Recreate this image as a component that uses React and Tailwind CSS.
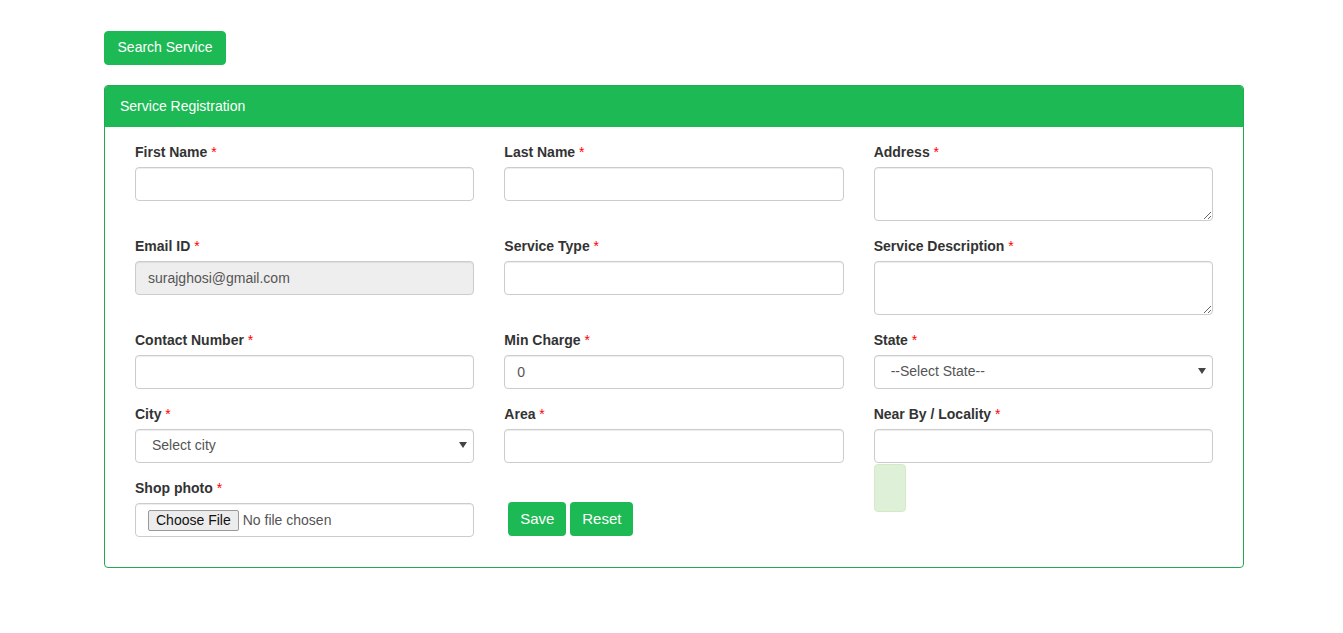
import React from 'react';

const baseCls =
  'block w-full h-[34px] px-3 text-[14px] text-[#555] border border-[#ccc] rounded-[4px] shadow-[inset_0_1px_1px_rgba(0,0,0,0.075)] outline-none';
const inputCls = `${baseCls} bg-white`;

function Label({ children }) {
  return (
    <label className="block mb-[5px] h-5 leading-5 font-bold text-[#333]">
      {children} <span className="font-normal text-[#f00]">*</span>
    </label>
  );
}

function Field({ label, children, extra }) {
  return (
    <div className="px-[15px] mb-[15px]">
      <Label>{label}</Label>
      {children}
      {extra}
    </div>
  );
}

function SelectBox({ placeholder }) {
  return (
    <div className="relative">
      <select className={`${inputCls} appearance-none pl-[16px]`} defaultValue="">
        <option value="">{placeholder}</option>
      </select>
      <span className="pointer-events-none absolute right-[7px] top-[13px] w-0 h-0 border-l-[4px] border-r-[4px] border-t-[6px] border-l-transparent border-r-transparent border-t-[#444]" />
    </div>
  );
}

export default function App() {
  return (
    <div className="min-h-screen bg-white text-[14px] leading-[1.42857] text-[#333] font-['Liberation_Sans',Arial,sans-serif]">
      <div className="w-[1140px] ml-[104px] pt-[31px]">
        <button className="h-[34px] w-[122px] bg-[#1db954] text-white rounded-[4px] border border-[#1db954]">
          Search Service
        </button>

        <div className="mt-5 border border-[#25a84f] rounded-[4px]">
          <div className="h-[41px] bg-[#1db954] text-white px-[15px] flex items-center rounded-t-[3px]">
            Service Registration
          </div>
          <div className="p-[15px]">
            <div className="grid grid-cols-3">
              <Field label="First Name">
                <input className={inputCls} />
              </Field>
              <Field label="Last Name">
                <input className={inputCls} />
              </Field>
              <Field label="Address">
                <textarea className={`${inputCls} h-[54px] py-[6px]`} />
              </Field>

              <Field label="Email ID">
                <input className={`${baseCls} bg-[#eee]`} disabled defaultValue="surajghosi@gmail.com" />
              </Field>
              <Field label="Service Type">
                <input className={inputCls} />
              </Field>
              <Field label="Service Description">
                <textarea className={`${inputCls} h-[54px] py-[6px]`} />
              </Field>

              <Field label="Contact Number">
                <input className={inputCls} />
              </Field>
              <Field label="Min Charge">
                <input className={inputCls} defaultValue="0" />
              </Field>
              <Field label="State">
                <SelectBox placeholder="--Select State--" />
              </Field>

              <Field label="City">
                <SelectBox placeholder="Select city" />
              </Field>
              <Field label="Area">
                <input className={inputCls} />
              </Field>
              <Field
                label="Near By / Locality"
                extra={
                  <div className="mt-[1px] mb-[-49px] w-[32px] h-[48px] bg-[#dff0d8] border border-[#d6e9c6] rounded-[4px]" />
                }
              >
                <input className={inputCls} />
              </Field>

              <div className="px-[15px] mb-[15px]">
                <Label>Shop photo</Label>
                <input
                  type="file"
                  className={`${inputCls} pl-3 pt-[6px] text-[14px] text-[#333] file:mr-[4px] file:h-[21px] file:px-[7px] file:text-[14px] file:text-[#111] file:bg-[#ececec] file:border file:border-[#999] file:rounded-[2px]`}
                />
              </div>
              <div className="px-[15px] pt-6 flex gap-1 pl-[19px]">
                <button className="h-[34px] w-[58px] bg-[#1db954] text-white text-[15px] rounded-[4px]">Save</button>
                <button className="h-[34px] w-[63px] bg-[#1db954] text-white text-[15px] rounded-[4px]">Reset</button>
              </div>
              <div />
            </div>
          </div>
        </div>
      </div>
    </div>
  );
}
